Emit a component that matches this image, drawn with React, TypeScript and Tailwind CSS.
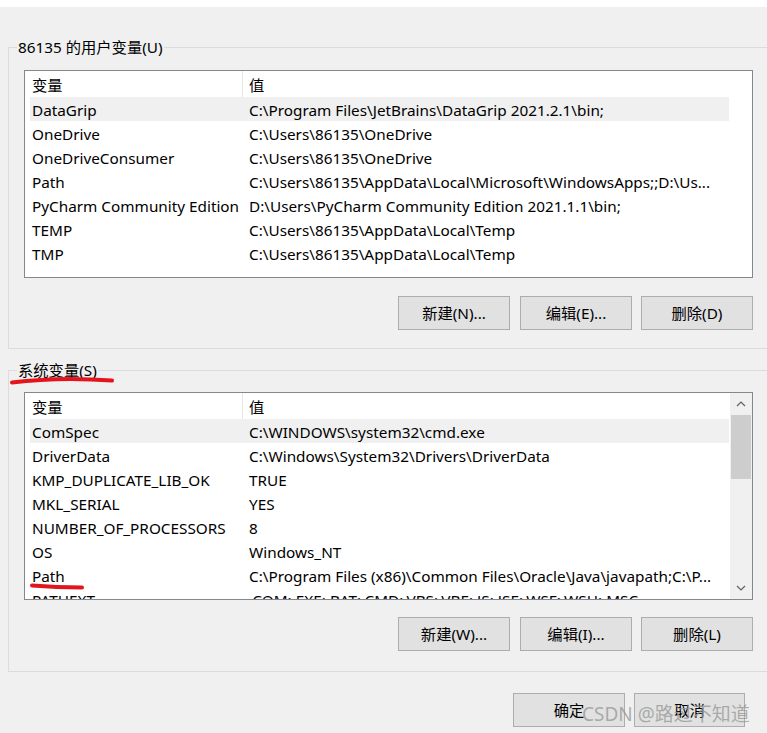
import React from "react";

type Row = [string, string];

const userVars: Row[] = [
  ["DataGrip", "C:\\Program Files\\JetBrains\\DataGrip 2021.2.1\\bin;"],
  ["OneDrive", "C:\\Users\\86135\\OneDrive"],
  ["OneDriveConsumer", "C:\\Users\\86135\\OneDrive"],
  ["Path", "C:\\Users\\86135\\AppData\\Local\\Microsoft\\WindowsApps;;D:\\Us..."],
  ["PyCharm Community Edition", "D:\\Users\\PyCharm Community Edition 2021.1.1\\bin;"],
  ["TEMP", "C:\\Users\\86135\\AppData\\Local\\Temp"],
  ["TMP", "C:\\Users\\86135\\AppData\\Local\\Temp"],
];

const sysVars: Row[] = [
  ["ComSpec", "C:\\WINDOWS\\system32\\cmd.exe"],
  ["DriverData", "C:\\Windows\\System32\\Drivers\\DriverData"],
  ["KMP_DUPLICATE_LIB_OK", "TRUE"],
  ["MKL_SERIAL", "YES"],
  ["NUMBER_OF_PROCESSORS", "8"],
  ["OS", "Windows_NT"],
  ["Path", "C:\\Program Files (x86)\\Common Files\\Oracle\\Java\\javapath;C:\\P..."],
  ["PATHEXT", ".COM;.EXE;.BAT;.CMD;.VBS;.VBE;.JS;.JSE;.WSF;.WSH;.MSC"],
];

function Header() {
  return (
    <div className="flex h-[26px] w-[699px] items-start bg-white">
      <div className="w-[212px] pl-[2px] pt-[2px] leading-[24px]">变量</div>
      <div className="h-[26px] w-px bg-[#e5e5e5]" />
      <div className="flex-1 pl-[6px] pt-[2px] leading-[24px]">值</div>
    </div>
  );
}

function Rows({ rows }: { rows: Row[] }) {
  return (
    <>
      {rows.map(([k, v], i) => (
        <div
          key={k + i}
          className={
            "flex h-[24px] w-[699px] items-start whitespace-nowrap " +
            (i === 0 ? "bg-[#f0f0f0]" : "bg-white")
          }
        >
          <div className="w-[212px] shrink-0 overflow-hidden pl-[2px] pt-[2px] leading-[22px]">{k}</div>
          <div className="flex-1 overflow-hidden pl-[7px] pt-[2px] leading-[22px]">{v}</div>
        </div>
      ))}
    </>
  );
}

function Chevron({ up }: { up?: boolean }) {
  return (
    <svg width="10" height="6" viewBox="0 0 10 6">
      <path
        d={up ? "M1 5 L5 1 L9 5" : "M1 1 L5 5 L9 1"}
        fill="none"
        stroke="#606060"
        strokeWidth="1.2"
      />
    </svg>
  );
}

function Button({ label, cls = "w-[112px]" }: { label: string; cls?: string }) {
  return (
    <div
      className={
        cls +
        " flex h-[34px] shrink-0 items-center justify-center border border-[#adadad] bg-[#e1e1e1] text-black"
      }
    >
      {label}
    </div>
  );
}

export default function App() {
  return (
    <div
      className="relative h-[733px] w-[767px] overflow-hidden bg-[#f0f0f0] text-[15.3px] text-black"
      style={{ fontFamily: '"Noto Sans", "Noto Sans CJK SC", sans-serif' }}
    >
      <div className="h-[7px] bg-white" />
      <div className="pl-[8px] pt-[40px]">
        {/* User variables group */}
        <div className="relative h-[302px] w-[790px] border border-[#dcdcdc] pl-[15px] pt-[22px]">
          <div className="absolute left-[8px] top-[-12px] bg-[#f0f0f0] px-px leading-[22px]">
            86135 的用户变量(U)
          </div>
          <div className="h-[208px] w-[729px] overflow-hidden border border-[#828790] bg-white pl-[5px]">
            <Header />
            <Rows rows={userVars} />
          </div>
          <div className="mt-[18px] flex w-[729px] justify-end">
            <Button label="新建(N)..." />
            <Button label="编辑(E)..." cls="ml-[10px] w-[112px]" />
            <Button label="删除(D)" cls="ml-[9px] w-[112px]" />
          </div>
        </div>

        {/* System variables group */}
        <div className="relative mt-[21px] h-[302px] w-[790px] border border-[#dcdcdc] pl-[15px] pt-[21px]">
          <div className="absolute left-[8px] top-[-12px] bg-[#f0f0f0] px-px leading-[22px]">
            系统变量(S)
          </div>
          <div className="flex h-[208px] w-[729px] overflow-hidden border border-[#828790] bg-white">
            <div className="w-[705px] overflow-hidden pl-[5px]">
              <Header />
              <Rows rows={sysVars} />
            </div>
            <div className="flex w-[22px] flex-col bg-[#f0f0f0]">
              <div className="flex h-[22px] items-center justify-center">
                <Chevron up />
              </div>
              <div className="mx-px h-[64px] bg-[#cdcdcd]" />
              <div className="flex-1" />
              <div className="flex h-[22px] items-center justify-center">
                <Chevron />
              </div>
            </div>
          </div>
          <div className="mt-[17px] flex w-[729px] justify-end">
            <Button label="新建(W)..." />
            <Button label="编辑(I)..." cls="ml-[10px] w-[112px]" />
            <Button label="删除(L)" cls="ml-[9px] w-[112px]" />
          </div>
        </div>

        {/* Dialog buttons */}
        <div className="mt-[21px] flex pl-[505px]">
          <Button label="确定" />
          <Button label="取消" cls="ml-[9px] w-[111px]" />
        </div>
      </div>

      {/* Red annotation strokes */}
      <svg className="pointer-events-none absolute left-0 top-0" width="767" height="733">
        <path
          d="M12 382.5 C 40 379, 70 377.5, 112 380.5"
          fill="none"
          stroke="#e3141c"
          strokeWidth="4"
          strokeLinecap="round"
        />
        <path
          d="M32 585.5 C 50 587, 66 587.5, 82 587.5"
          fill="none"
          stroke="#e3141c"
          strokeWidth="4"
          strokeLinecap="round"
        />
      </svg>

      {/* Watermark */}
      <div className="pointer-events-none absolute left-[582px] top-[701px] whitespace-nowrap text-[19px] leading-[26px] text-[rgba(150,150,150,0.75)]">
        CSDN @路过不知道
      </div>
    </div>
  );
}
